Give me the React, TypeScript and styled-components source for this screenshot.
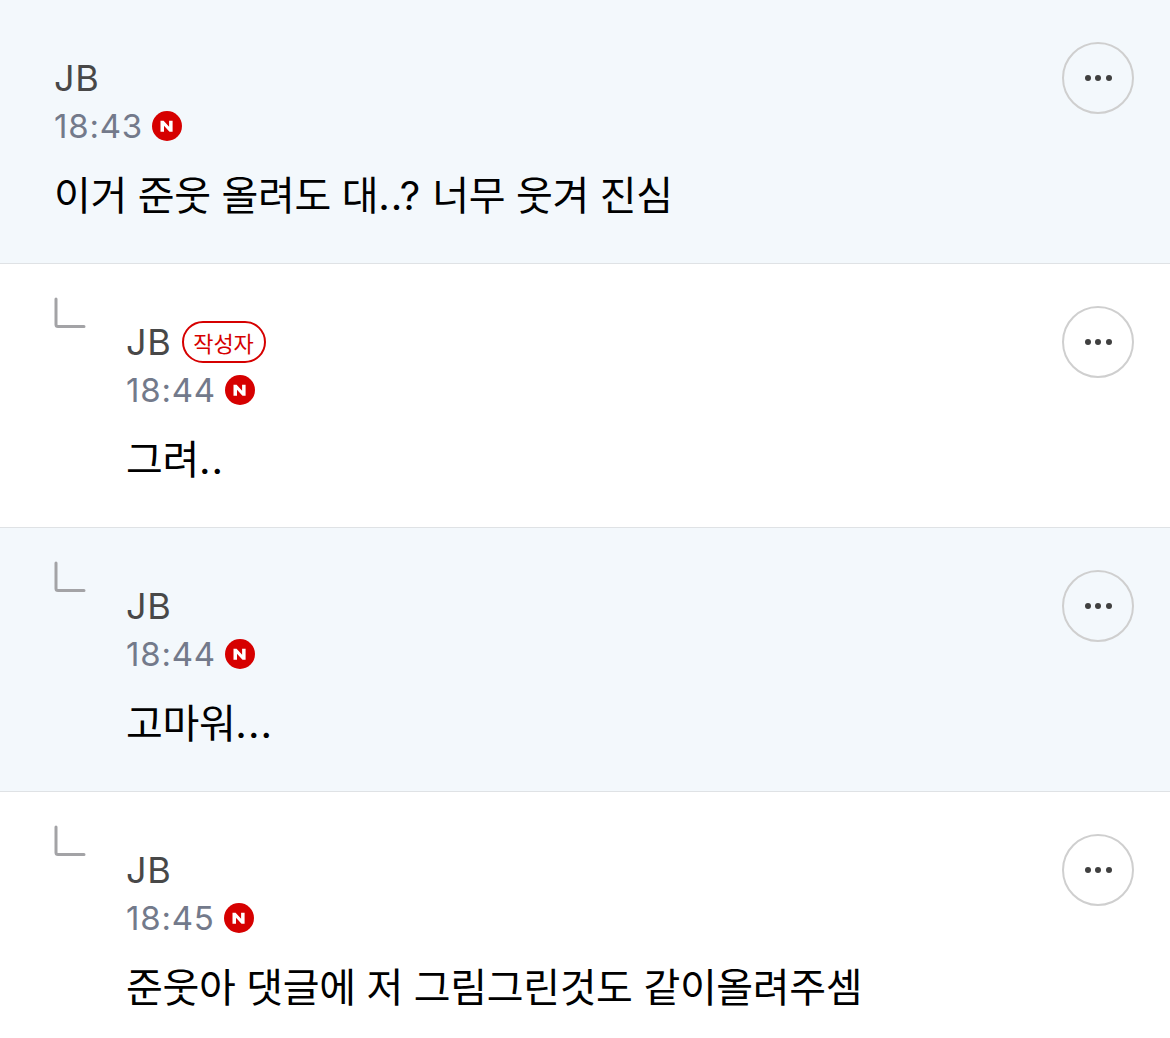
import React from 'react';
import styled, { createGlobalStyle } from 'styled-components';

const GlobalStyle = createGlobalStyle`
  html, body {
    margin: 0;
    padding: 0;
    background: #fff;
    font-family: Inter, "Noto Sans CJK KR", sans-serif;
  }
`;

const NBadge: React.FC = () => (
  <svg width="30" height="30" viewBox="0 0 30 30">
    <circle cx="15" cy="15" r="15" fill="#d60000" />
    <path d="M8.5 20.7V9.8h3.1l5.5 5.9V9.8h3.5V20.7h-3.1l-5.5-5.9v5.9z" fill="#fff" />
  </svg>
);

const ReplyArrow: React.FC = () => (
  <svg width="32" height="32" viewBox="0 0 32 32">
    <path d="M2 2v25.5q0 2 2 2h26" fill="none" stroke="#a3a3a6" strokeWidth="3" strokeLinecap="round" />
  </svg>
);

const App: React.FC = () => {
  const comments = [
    {
      time: '18:43',
      text: (
        <>
          이거 준웃 올려도 대<Dots>..?</Dots> 너무 웃겨 진심
        </>
      ),
      shaded: true,
    },
    {
      time: '18:44',
      text: (
        <>
          그려<Dots>..</Dots>
        </>
      ),
      reply: true,
      author: true,
    },
    {
      time: '18:44',
      text: (
        <>
          고마워<Dots>...</Dots>
        </>
      ),
      reply: true,
      shaded: true,
    },
    { time: '18:45', text: <>준웃아 댓글에 저 그림그린것도 같이올려주셈</>, reply: true },
  ];

  return (
    <>
      <GlobalStyle />
      <List>
        {comments.map((c, i) => (
          <Row key={i} $shaded={c.shaded} $last={i === comments.length - 1}>
            {c.reply && (
              <ArrowSlot>
                <ReplyArrow />
              </ArrowSlot>
            )}
            <Body>
              <NameLine>
                <Name>JB</Name>
                {c.author && <AuthorTag>작성자</AuthorTag>}
              </NameLine>
              <MetaLine>
                <Time>{c.time}</Time>
                <NBadge />
              </MetaLine>
              <Text>{c.text}</Text>
            </Body>
            <MoreButton aria-label="more">
              <Dot />
              <Dot />
              <Dot />
            </MoreButton>
          </Row>
        ))}
      </List>
    </>
  );
};

const List = styled.div`
  width: 1170px;
  height: 1038px;
  overflow: hidden;
`;

const Row = styled.div<{ $shaded?: boolean; $last?: boolean }>`
  display: flex;
  align-items: flex-start;
  box-sizing: border-box;
  height: 264px;
  padding: 42px 36px 0 54px;
  background: ${(p) => (p.$shaded ? '#f3f8fc' : '#ffffff')};
  border-bottom: ${(p) => (p.$last ? 'none' : '1px solid #dfe2e5')};
`;

const ArrowSlot = styled.div`
  flex: 0 0 72px;
  height: 32px;
  margin-top: -9px;
`;

const Body = styled.div`
  flex: 1;
  min-width: 0;
`;

const NameLine = styled.div`
  display: flex;
  align-items: center;
  gap: 10px;
  height: 72px;
`;

const Name = styled.span`
  font-size: 36px;
  letter-spacing: 0.7px;
  line-height: 72px;
  color: #484848;
`;

const AuthorTag = styled.span`
  display: flex;
  align-items: center;
  justify-content: center;
  box-sizing: border-box;
  width: 84px;
  height: 42px;
  border: 2px solid #d60000;
  border-radius: 21px;
  font-size: 22px;
  color: #d60000;
`;

const MetaLine = styled.div`
  display: flex;
  align-items: center;
  gap: 9px;
  height: 24px;
`;

const Time = styled.span`
  font-size: 33px;
  letter-spacing: 0.8px;
  line-height: 24px;
  color: #737a8b;
`;

const Text = styled.div`
  margin-top: 28px;
  font-size: 40px;
  letter-spacing: -0.35px;
  line-height: 60px;
  color: #000;
  white-space: nowrap;
`;

const Dots = styled.span`
  letter-spacing: 1px;
`;

const MoreButton = styled.button`
  display: flex;
  align-items: center;
  justify-content: center;
  gap: 4.5px;
  flex: 0 0 72px;
  height: 72px;
  padding: 0;
  background: transparent;
  border: 2px solid #cfcfcf;
  border-radius: 50%;
`;

const Dot = styled.span`
  width: 6px;
  height: 6px;
  border-radius: 50%;
  background: #404040;
`;

export default App;
